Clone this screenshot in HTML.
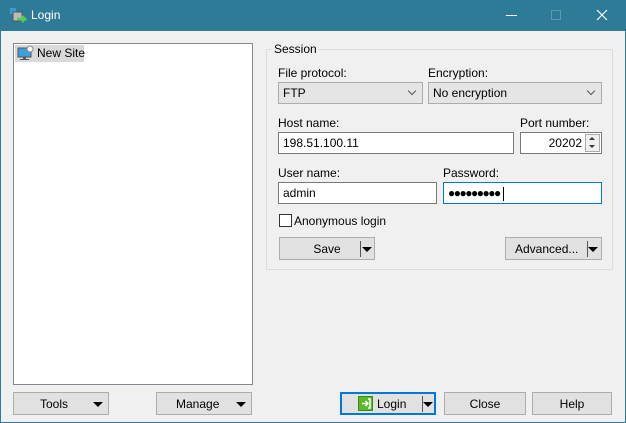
<!DOCTYPE html>
<html><head><style>
*{box-sizing:border-box;margin:0;padding:0}
body{width:626px;height:423px;position:relative;background:#f0f0f0;font-family:"Liberation Sans",sans-serif;font-size:12px;color:#000;overflow:hidden}
.a{position:absolute}
.title{left:0;top:0;width:626px;height:31px;background:#2e7b97}
.frame{left:0;top:31px;width:626px;height:392px;border:1px solid #2e7b97;border-top:none}
.btn{position:absolute;background:#e1e1e1;border:1px solid #adadad;height:23px;line-height:23px;text-align:center}
.inp{position:absolute;background:#fff;border:1px solid #7a7a7a;height:22px;line-height:20px;padding-left:4px}
.cmb{position:absolute;background:#e5e5e5;border:1px solid #acacac;height:22px;line-height:20px;padding-left:4px}
.tri{position:absolute;width:0;height:0;border-left:5px solid transparent;border-right:5px solid transparent;border-top:5px solid #000}
.chev{position:absolute;width:6px;height:6px;border-right:1px solid #555;border-bottom:1px solid #555;transform:rotate(45deg)}
</style></head><body>
<div class="a title"></div>
<div class="a frame"></div>
<svg class="a" style="left:9px;top:7px" width="18" height="18"><rect x="1" y="1" width="6" height="6" fill="#3a9ad9"/><rect x="4" y="5" width="9" height="9" fill="#bbb" stroke="#555"/><path d="M8 12 L16 12 L13 9 M16 12 L13 15" stroke="#5c5" stroke-width="2.5" fill="none"/></svg>
<div class="a" style="left:31px;top:8px;color:#fff;font-size:12px">Login</div>
<div class="a" style="left:506px;top:15px;width:11px;height:1px;background:#fff"></div>
<div class="a" style="left:551px;top:10px;width:10px;height:10px;border:1px solid #5a9ab2"></div>
<svg class="a" style="left:596px;top:9px" width="12" height="12"><path d="M1 1L11 11M11 1L1 11" stroke="#fff" stroke-width="1.2"/></svg>

<div class="a" style="left:13px;top:43px;width:240px;height:342px;background:#fff;border:1px solid #828790"></div>
<div class="a" style="left:15px;top:45px;width:69px;height:17px;background:#d9d9d9"></div>
<svg class="a" style="left:17px;top:45px" width="17" height="16"><rect x="1" y="3" width="13" height="9" fill="#3aa0de" stroke="#555"/><rect x="6" y="12" width="3" height="2" fill="#555"/><rect x="3" y="14" width="9" height="1" fill="#555"/><circle cx="13" cy="4" r="3" fill="#fff" stroke="#888"/></svg>
<div class="a" style="left:37px;top:46px">New Site</div>

<div class="a" style="left:266px;top:49px;width:347px;height:221px;border:1px solid #dcdcdc"></div>
<div class="a" style="left:272px;top:42px;background:#f0f0f0;padding:0 2px">Session</div>
<div class="a" style="left:278px;top:66px">File protocol:</div>
<div class="cmb" style="left:278px;top:82px;width:145px">FTP</div><div class="chev" style="left:409px;top:88px"></div>
<div class="a" style="left:428px;top:66px">Encryption:</div>
<div class="cmb" style="left:428px;top:82px;width:174px">No encryption</div><div class="chev" style="left:588px;top:88px"></div>
<div class="a" style="left:278px;top:116px">Host name:</div>
<div class="inp" style="left:278px;top:132px;width:236px">198.51.100.11</div>
<div class="a" style="left:520px;top:116px">Port number:</div>
<div class="inp" style="left:520px;top:132px;width:82px;text-align:right;padding-right:19px">20202</div>
<div class="a" style="left:585px;top:134px;width:15px;height:18px;border:1px solid #aaa;background:#f0f0f0"></div>
<div class="a" style="left:589px;top:137px;border-left:3px solid transparent;border-right:3px solid transparent;border-bottom:3px solid #333"></div>
<div class="a" style="left:589px;top:145px;border-left:3px solid transparent;border-right:3px solid transparent;border-top:3px solid #333"></div>
<div class="a" style="left:278px;top:166px">User name:</div>
<div class="inp" style="left:278px;top:182px;width:159px">admin</div>
<div class="a" style="left:443px;top:166px">Password:</div>
<div class="inp" style="left:443px;top:182px;width:159px;border-color:#0078d7;font-size:12px;letter-spacing:-1.5px">●●●●●●●●●<span style="display:inline-block;width:1px;height:14px;background:#000;vertical-align:middle;margin-left:3px"></span></div>
<div class="a" style="left:279px;top:214px;width:13px;height:13px;border:1px solid #333;background:#fff"></div>
<div class="a" style="left:294px;top:214px">Anonymous login</div>
<div class="btn" style="left:279px;top:237px;width:96px">Save<span style="position:absolute;left:80px;top:3px;width:1px;height:16px;background:#555"></span></div>
<div class="tri" style="left:362px;top:247px"></div>
<div class="btn" style="left:505px;top:237px;width:97px;text-align:left;padding-left:9px">Advanced...<span style="position:absolute;left:81px;top:3px;width:1px;height:16px;background:#555"></span></div>
<div class="tri" style="left:588px;top:247px"></div>

<div class="btn" style="left:13px;top:392px;width:96px;text-align:left;padding-left:26px">Tools</div><div class="tri" style="left:93px;top:402px"></div>
<div class="btn" style="left:156px;top:392px;width:96px;text-align:left;padding-left:19px">Manage</div><div class="tri" style="left:236px;top:402px"></div>
<div class="btn" style="left:340px;top:392px;width:96px;border:2px solid #0078d7;text-align:left;padding-left:35px;line-height:21px">Login<span style="position:absolute;left:80px;top:2px;width:1px;height:16px;background:#555"></span></div>
<div class="tri" style="left:423px;top:402px"></div>
<svg class="a" style="left:358px;top:396px" width="15" height="15"><rect x="0.5" y="0.5" width="14" height="14" fill="#5cb82a" stroke="#3a8a1a"/><path d="M4 7.5H10M7.5 5L10 7.5L7.5 10M10 3H12V12H10" stroke="#fff" stroke-width="1.5" fill="none"/></svg>
<div class="btn" style="left:444px;top:392px;width:82px">Close</div>
<div class="btn" style="left:532px;top:392px;width:80px">Help</div>
</body></html>
